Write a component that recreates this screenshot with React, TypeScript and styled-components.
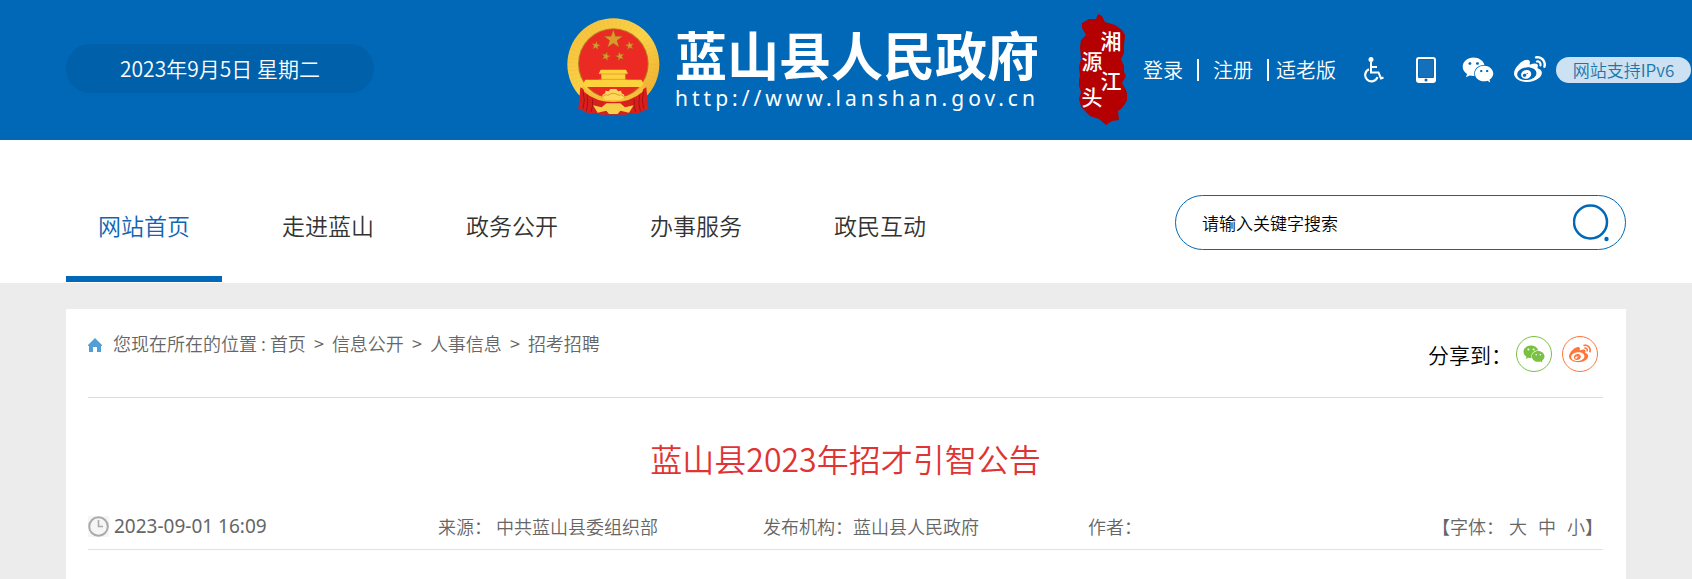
import React from "react";
import styled, { createGlobalStyle } from "styled-components";
import { FaWeibo, FaWeixin } from "react-icons/fa";

const GlobalStyle = createGlobalStyle`
  *, *::before, *::after { box-sizing: border-box; }
  body {
    margin: 0;
    background: #ececec;
    color: #666;
    font-family: "Noto Sans CJK SC", "Noto Sans", sans-serif;
    font-size: 18px;
    font-weight: 350;
    line-height: 24px;
  }
  a { color: inherit; text-decoration: none; }
  button { font: inherit; color: inherit; border: 0; padding: 0; background: none; cursor: pointer; }
`;

const Header = styled.header`
  display: flex;
  align-items: center;
  min-height: 140px;
  padding: 0 1px 0 66px;
  background: #0068b7;
  color: #fff;
  white-space: nowrap;
`;

const DatePill = styled.time`
  flex: 0 0 308px;
  height: 49px;
  margin-bottom: 4px;
  border-radius: 25px;
  background: #0060aa;
  font-size: 21px;
  line-height: 48px;
  text-align: center;
`;

const Brand = styled.a`
  display: flex;
  align-items: center;
  gap: 15px;
  margin-left: auto;
  svg { margin-bottom: 6px; }
`;

const BrandText = styled.div`
  display: flex;
  flex-direction: column;
  width: 368px;
`;

const BrandName = styled.strong`
  font-size: 52px;
  font-weight: 700;
  line-height: 56px;
`;

const BrandUrl = styled.span`
  font-family: "Noto Sans", sans-serif;
  font-size: 21px;
  font-weight: 400;
  line-height: 32px;
  letter-spacing: 4px;
`;

const Seal = styled.svg`
  flex: none;
  margin: 0 16px 0 36px;
`;

const UserLinks = styled.nav`
  display: flex;
  align-items: center;
  font-size: 20px;
`;

const Divider = styled.span<{ $after: number }>`
  width: 2px;
  height: 22px;
  margin: 0 ${(p) => p.$after}px 0 14px;
  background: #fff;
`;

const Tools = styled.div`
  display: flex;
  align-items: center;
  margin-left: 12px;
`;

const Tool = styled.a`
  display: flex;
  justify-content: center;
  width: 52px;
`;

const Ipv6 = styled.a`
  width: 135px;
  height: 26px;
  border-radius: 13px;
  background: #cce1f1;
  color: #1a76ad;
  font-size: 17px;
  line-height: 25px;
  text-align: center;
`;

const NavBar = styled.div`
  display: flex;
  align-items: flex-start;
  justify-content: space-between;
  min-height: 143px;
  padding: 0 66px;
  background: #fff;
`;

const NavList = styled.nav`
  display: flex;
  gap: 28px;
`;

const NavItem = styled.a<{ $active?: boolean }>`
  width: 156px;
  height: 142px;
  padding-top: 69px;
  border-bottom: 6px solid ${(p) => (p.$active ? "#0068b7" : "transparent")};
  color: ${(p) => (p.$active ? "#0f65b5" : "#333")};
  font-size: 23px;
  line-height: 32px;
  text-align: center;
`;

const Search = styled.form`
  display: flex;
  align-items: center;
  width: 451px;
  height: 55px;
  margin-top: 55px;
  padding: 0 16px 0 26px;
  border: 1px solid #0068b7;
  border-radius: 28px;
`;

const SearchInput = styled.input`
  flex: 1;
  min-width: 0;
  padding: 0;
  border: 0;
  outline: 0;
  background: none;
  color: #000;
  font: inherit;
  font-size: 17px;
  &::placeholder { color: #000; opacity: 1; }
`;

const SearchButton = styled.button`
  display: flex;
`;

const Card = styled.main`
  margin: 26px 66px 0;
  padding: 0 23px 0 22px;
  min-height: 270px;
  background: #fff;
`;

const CardTop = styled.div`
  display: flex;
  align-items: flex-start;
  justify-content: space-between;
  height: 89px;
  border-bottom: 1px solid #ddd;
`;

const Crumbs = styled.nav`
  display: flex;
  align-items: center;
  padding-top: 22px;
  svg { margin: 4px 11px 0 0; }
`;

const CrumbSep = styled.span`
  width: 26px;
  text-align: center;
`;

const Share = styled.div`
  display: flex;
  align-items: center;
  gap: 10px;
  padding: 27px 5px 0 0;
`;

const ShareLabel = styled.span`
  margin-right: -6px;
  color: #000;
  font-size: 21px;
`;

const ShareLink = styled.a<{ $color: string }>`
  display: flex;
  align-items: center;
  justify-content: center;
  width: 36px;
  height: 36px;
  border: 1px solid ${(p) => p.$color};
  border-radius: 50%;
  color: ${(p) => p.$color};
`;

const Title = styled.h1`
  margin: 0;
  padding: 38px 0 32px;
  color: #df3434;
  font-size: 32px;
  font-weight: inherit;
  line-height: 44px;
  text-align: center;
`;

const Meta = styled.div`
  display: grid;
  grid-template-columns: 350px 325px 325px 1fr auto;
  align-items: center;
  height: 38px;
  padding-bottom: 9px;
  border-bottom: 1px solid #e2e2e2;
  white-space: nowrap;
`;

const Published = styled.time`
  display: flex;
  align-items: center;
  gap: 5px;
  font-family: "Noto Sans", sans-serif;
  font-size: 19px;
  font-weight: 400;
`;

const FontSize = styled.div`
  display: flex;
`;

const SizeButton = styled.button`
  margin-left: 11px;
  &:first-of-type { margin-left: 5px; }
`;

const star = (cx: number, cy: number, r: number, turn = 0) =>
  Array.from({ length: 10 }, (_, i) => {
    const a = ((i * 36 - 90 + turn) * Math.PI) / 180;
    const d = i % 2 ? r * 0.4 : r;
    return `${(cx + d * Math.cos(a)).toFixed(1)},${(cy + d * Math.sin(a)).toFixed(1)}`;
  }).join(" ");

const Emblem = () => (
  <svg width="93" height="98" viewBox="0 0 279 294" aria-hidden="true">
    <defs>
      <linearGradient id="gold" x1="0" y1="0" x2="1" y2="1">
        <stop offset="0" stopColor="#f3bd3a" />
        <stop offset=".5" stopColor="#fbd447" />
        <stop offset="1" stopColor="#e9a42b" />
      </linearGradient>
    </defs>
    <circle cx="139" cy="139" r="138" fill="url(#gold)" />
    <circle cx="139" cy="139" r="121" fill="none" stroke="#e3a42c" strokeWidth="24" strokeDasharray="3 9" opacity=".15" />
    <circle cx="139" cy="137" r="106" fill="#b97a24" />
    <circle cx="139" cy="137" r="103" fill="#ec2a24" />
    <g fill="#d99b2c" stroke="#9c5a1c" strokeWidth="1">
      <polygon points={star(139, 64, 29)} />
      <polygon points={star(87, 83, 14, 10)} />
      <polygon points={star(188, 83, 14, -10)} />
      <polygon points={star(117, 115, 14, 14)} />
      <polygon points={star(159, 115, 14, -14)} />
    </g>
    <path d="M101 155h76l6 12h-8v18h48l7 12-8 10H56l-8-10 7-12h48v-18h-8z" fill="#fdd23c" />
    <path d="M98 168h82M96 184h86" stroke="#e08a24" strokeWidth="2" />
    <path d="M40 208l8 4q36 34 91 34t91-34l8-4 6 66-16 4-16 10-20-4-14 6h-78l-14-6-20 4-16-10-16-4z" fill="#d91f1c" />
    <path d="M48 220q8 26 0 52M60 230q6 24-2 50M76 244q4 18-4 38M230 220q-8 26 0 52M218 230q-6 24 2 50M202 244q-4 18 4 38" fill="none" stroke="#a31315" strokeWidth="3" />
    <path d="M46 202q40 40 93 40t93-40l-6 20q-34 30-87 30t-87-30z" fill="#f6bf3a" />
    <path d="M104 238q2-10 10-12l2-8 9 2 5-7h18l5 7 9-2 2 8q8 2 10 12l-14 8h-42z" fill="#fdd85a" />
    <path d="M104 240q10-14 18-8 17-12 34 0 8-6 18 8" fill="none" stroke="#e0992a" strokeWidth="3" />
    <path d="M78 262l26 6 14-12h42l14 12 26-6-14 22-26-6-8 10h-26l-8-10-26 6z" fill="#f5cf4a" />
  </svg>
);

const SealMark = () => (
  <Seal width="48" height="114" viewBox="0 0 48 114" role="img" aria-label="湘江源头">
    <path
      d="M3 15L3 10l7-4 7 0 2-5 4 2 3 6 10 3 7 5 3 5-1 10 0 8-3 6 3 7 0 6 2 4-4 7 4 7 2 8-3 6-4 5-3 2 1 9-7 1-6 4-7-6-9-3-5-5-4-4-2-8 2-7-3-9 2-7-1-9 2-8-1-12 1-7 5-5z"
      fill="#b40000"
    />
    <g fill="#fff" fontFamily="'Noto Sans CJK SC', sans-serif" fontSize="21" fontWeight="500" textAnchor="middle">
      <text x="32" y="36">湘</text>
      <text x="13" y="56">源</text>
      <text x="32" y="76">江</text>
      <text x="13" y="92">头</text>
    </g>
  </Seal>
);

const WheelchairIcon = () => (
  <svg width="20" height="26" viewBox="0 0 20 26" aria-hidden="true">
    <circle cx="7" cy="2.500" r="2.500" fill="#fff" />
    <path d="M7 5v10.500h7.500l2.500 6 2.500-1M7.500 10H13" fill="none" stroke="#fff" strokeWidth="2" />
    <path d="M5 12.300A6.300 6.300 0 1 0 13.500 20" fill="none" stroke="#fff" strokeWidth="2.200" />
  </svg>
);

const TabletIcon = () => (
  <svg width="20" height="26" viewBox="0 0 20 26" aria-hidden="true">
    <rect width="20" height="26" rx="3" fill="#fff" />
    <rect x="2" y="2" width="16" height="19" rx="1" fill="#0068b7" />
    <rect x="3" y="3" width="14" height="17" fill="#1470bb" />
    <circle cx="10" cy="23" r="1.500" fill="#0068b7" />
  </svg>
);

const SearchIcon = () => (
  <svg width="36" height="38" viewBox="0 0 36 38" aria-hidden="true">
    <circle cx="17.500" cy="18" r="16.500" fill="none" stroke="#0068b7" strokeWidth="2.500" />
    <circle cx="33.500" cy="35" r="2.200" fill="#0068b7" />
  </svg>
);

const HomeIcon = () => (
  <svg width="14" height="14" viewBox="0 0 14 14" aria-hidden="true">
    <path d="M7 0l7 7v1h-1v6H9V9H5v5H1V8H0V7z" fill="#519fd6" />
  </svg>
);

const ClockIcon = () => (
  <svg width="21" height="21" viewBox="0 0 21 21" aria-hidden="true">
    <rect width="21" height="21" fill="#f5f5f5" />
    <circle cx="10.500" cy="10.500" r="9.300" fill="#f5f5f5" stroke="#aaa" strokeWidth="2" />
    <path d="M10.500 4v6.500H15" fill="none" stroke="#aaa" strokeWidth="1.600" />
  </svg>
);

const navItems = ["网站首页", "走进蓝山", "政务公开", "办事服务", "政民互动"];
const crumbs = ["首页", "信息公开", "人事信息", "招考招聘"];

export default function App() {
  return (
    <>
      <GlobalStyle />
      <Header>
        <DatePill dateTime="2023-09-05">2023年9月5日 星期二</DatePill>
        <Brand href="#">
          <Emblem />
          <BrandText>
            <BrandName>蓝山县人民政府</BrandName>
            <BrandUrl>http://www.lanshan.gov.cn</BrandUrl>
          </BrandText>
        </Brand>
        <SealMark />
        <UserLinks>
          <a href="#">登录</a>
          <Divider $after={14} />
          <a href="#">注册</a>
          <Divider $after={7} />
          <a href="#">适老版</a>
        </UserLinks>
        <Tools>
          <Tool href="#" aria-label="无障碍"><WheelchairIcon /></Tool>
          <Tool href="#" aria-label="手机版"><TabletIcon /></Tool>
          <Tool href="#" aria-label="微信"><FaWeixin size={32} /></Tool>
          <Tool href="#" aria-label="微博"><FaWeibo size={32} /></Tool>
          <Ipv6 href="#">网站支持IPv6</Ipv6>
        </Tools>
      </Header>
      <NavBar>
        <NavList>
          {navItems.map((label, i) => (
            <NavItem key={label} href="#" $active={i === 0}>{label}</NavItem>
          ))}
        </NavList>
        <Search onSubmit={(e) => e.preventDefault()}>
          <SearchInput type="text" aria-label="搜索" placeholder="请输入关键字搜索" />
          <SearchButton type="submit" aria-label="搜索"><SearchIcon /></SearchButton>
        </Search>
      </NavBar>
      <Card>
        <CardTop>
          <Crumbs>
            <HomeIcon />
            <span>您现在所在的位置 :&nbsp;</span>
            {crumbs.map((label, i) => (
              <React.Fragment key={label}>
                {i > 0 && <CrumbSep>&gt;</CrumbSep>}
                <a href="#">{label}</a>
              </React.Fragment>
            ))}
          </Crumbs>
          <Share>
            <ShareLabel>分享到：</ShareLabel>
            <ShareLink href="#" aria-label="分享到微信" $color="#7ac143"><FaWeixin size={22} /></ShareLink>
            <ShareLink href="#" aria-label="分享到微博" $color="#ff763b"><FaWeibo size={22} /></ShareLink>
          </Share>
        </CardTop>
        <Title>蓝山县2023年招才引智公告</Title>
        <Meta>
          <Published dateTime="2023-09-01T16:09"><ClockIcon />2023-09-01 16:09</Published>
          <span>来源： 中共蓝山县委组织部</span>
          <span>发布机构：蓝山县人民政府</span>
          <span>作者：</span>
          <FontSize>
            <span>【字体：</span>
            <SizeButton type="button">大</SizeButton>
            <SizeButton type="button">中</SizeButton>
            <SizeButton type="button">小</SizeButton>
            <span>】</span>
          </FontSize>
        </Meta>
      </Card>
    </>
  );
}
